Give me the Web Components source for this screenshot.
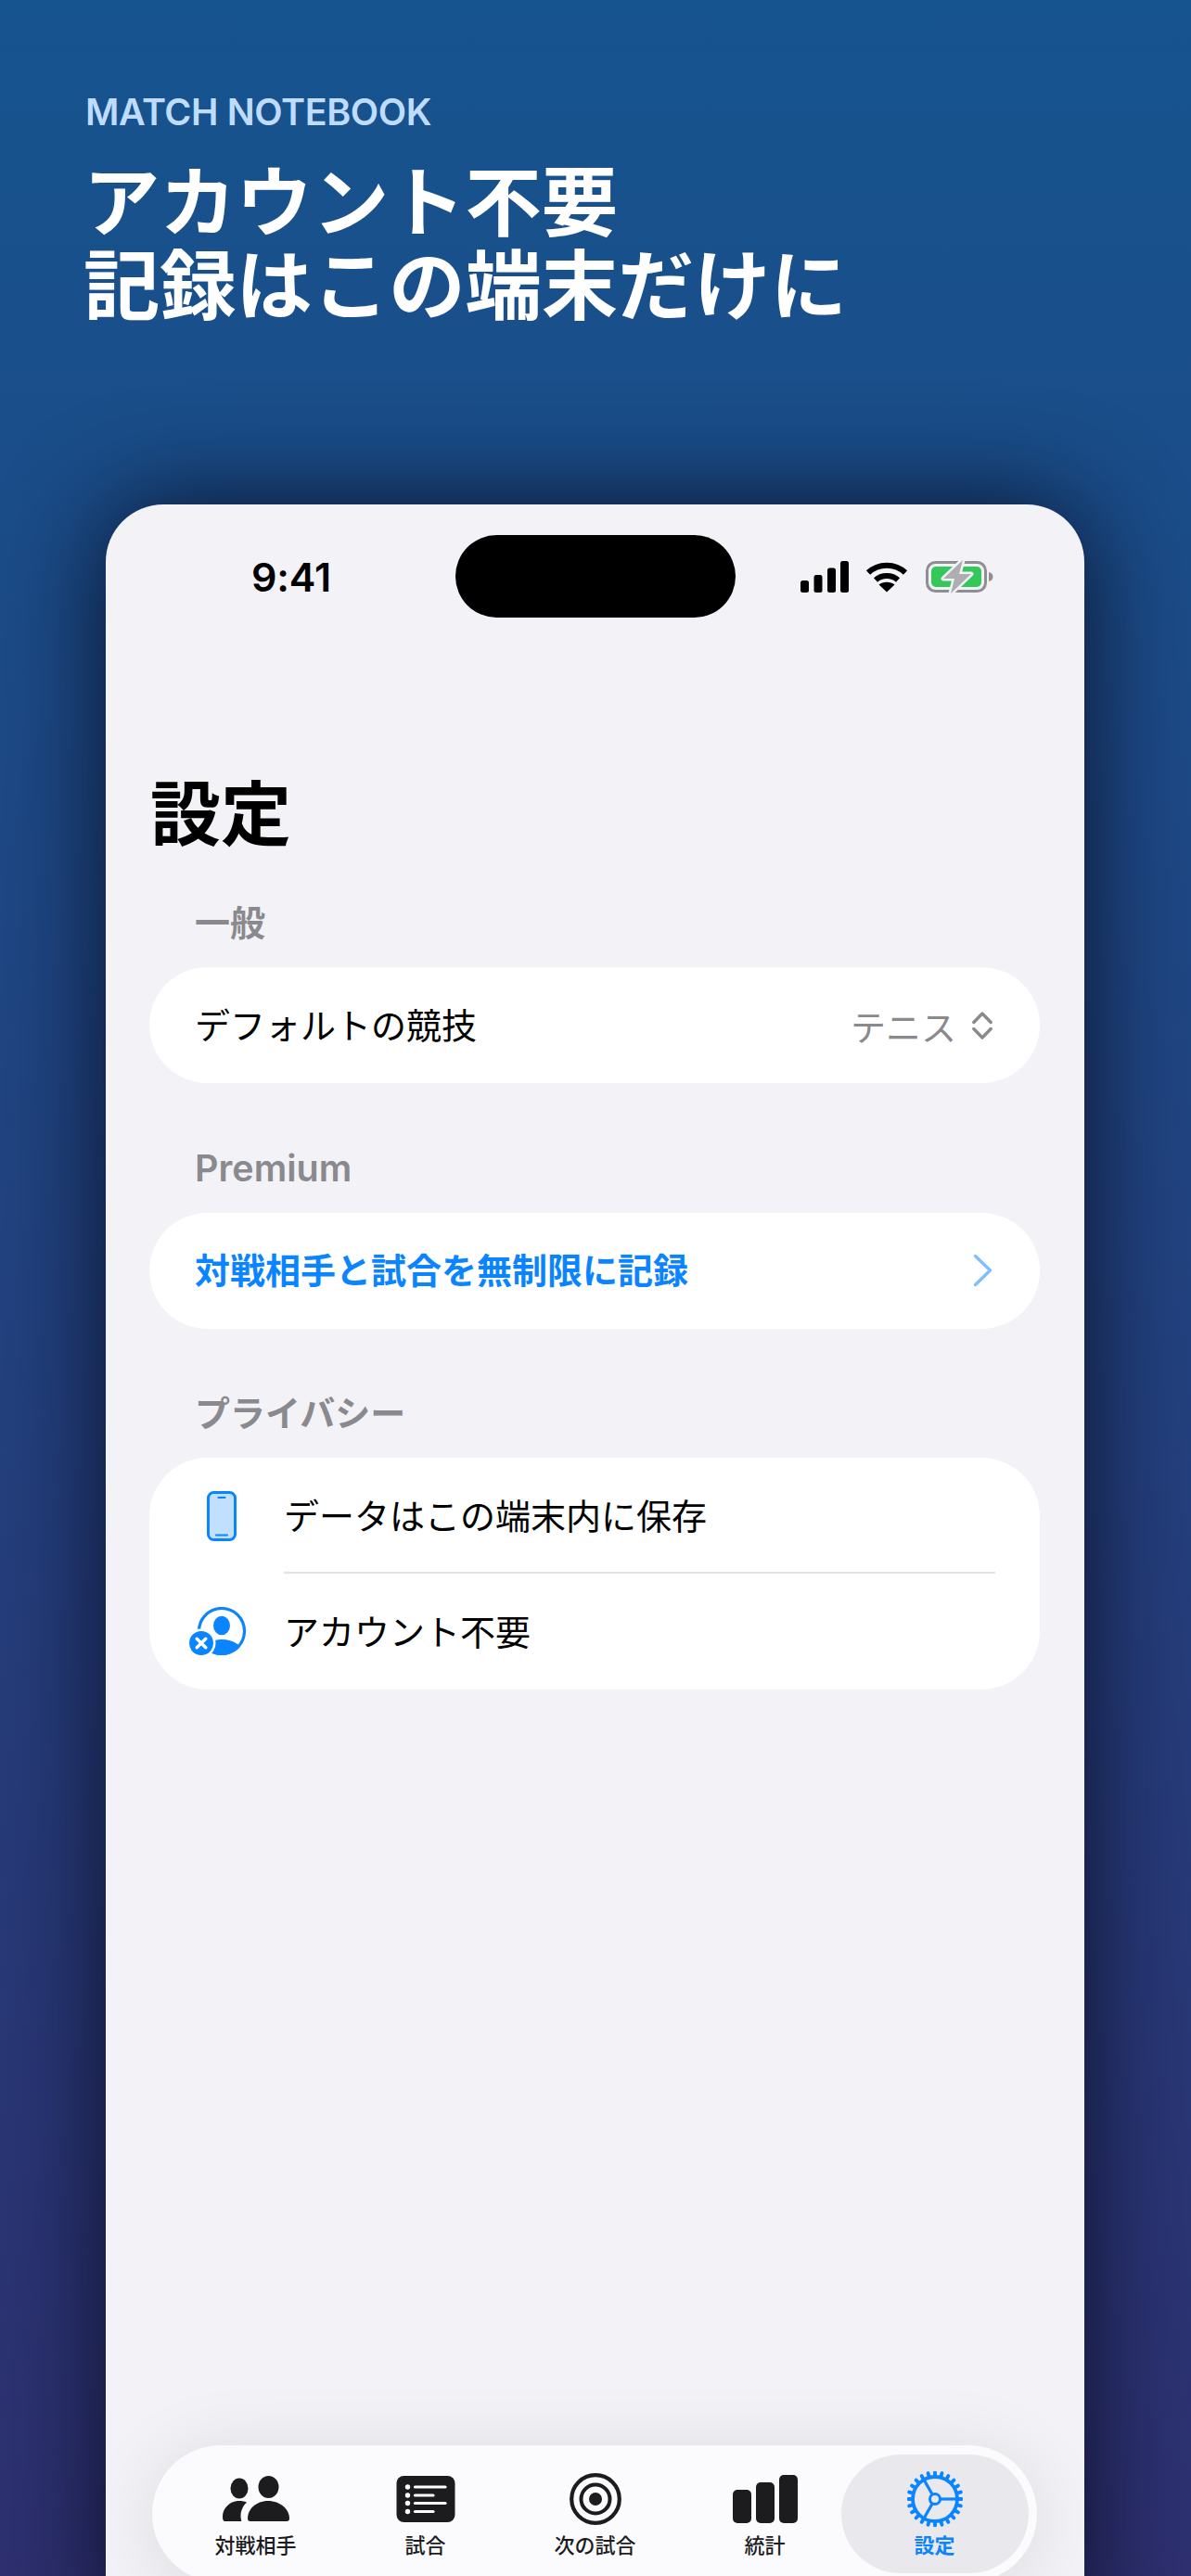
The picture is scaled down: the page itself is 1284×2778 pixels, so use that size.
<!DOCTYPE html>
<html lang="ja">
<head>
<meta charset="utf-8">
<title>Match Notebook</title>
<style>
  html, body { margin: 0; padding: 0; }
  body {
    width: 1284px;
    height: 2778px;
    overflow: hidden;
    font-family: Inter, "Noto Sans CJK JP", sans-serif;
    background: linear-gradient(180deg, #16548f 0%, #2e3070 100%);
  }
</style>
</head>
<body>
<store-shot>
  <span slot="eyebrow">MATCH NOTEBOOK</span>
  <span slot="line">アカウント不要</span>
  <span slot="line">記録はこの端末だけに</span>

  <phone-frame>
    <status-bar></status-bar>
    <large-title>設定</large-title>

    <settings-section label="一般">
      <settings-row variant="picker" value="テニス">デフォルトの競技</settings-row>
    </settings-section>

    <settings-section label="Premium" style="--label-size: 39.5px">
      <settings-row variant="link">対戦相手と試合を無制限に記録</settings-row>
    </settings-section>

    <settings-section label="プライバシー">
      <settings-row variant="info" icon="phone" divider>データはこの端末内に保存</settings-row>
      <settings-row variant="info" icon="account">アカウント不要</settings-row>
    </settings-section>

    <tab-bar slot="dock">
      <tab-item icon="people">対戦相手</tab-item>
      <tab-item icon="list">試合</tab-item>
      <tab-item icon="target">次の試合</tab-item>
      <tab-item icon="stats">統計</tab-item>
      <tab-item icon="gear" active>設定</tab-item>
    </tab-bar>
  </phone-frame>
</store-shot>

<script>
const FONT = 'Inter, "Noto Sans CJK JP", sans-serif';

function gearPath() {
  // 24 teeth round the rim
  let d = '';
  const cx = 30, cy = 30, n = 24;
  for (let i = 0; i < n; i++) {
    const a = (i / n) * Math.PI * 2;
    const x1 = cx + Math.cos(a) * 25, y1 = cy + Math.sin(a) * 25;
    const x2 = cx + Math.cos(a) * 28.8, y2 = cy + Math.sin(a) * 28.8;
    d += `M${x1.toFixed(2)} ${y1.toFixed(2)}L${x2.toFixed(2)} ${y2.toFixed(2)}`;
  }
  return d;
}

const ICONS = {
  people: `<svg width="75" height="50" viewBox="0 0 75 50" fill="#1c1c1e">
    <ellipse cx="20" cy="13.5" rx="9.5" ry="11"/>
    <ellipse cx="51.5" cy="12" rx="11" ry="12"/>
    <path d="M2 44c0-9 8-17 18-17 3 0 5.5.5 8 1.5C24 32 21.5 38 21.5 43c0 2 .3 3.5 .8 6H5c-2 0-3-1-3-5z"/>
    <path d="M29 46c0-10 9-19 22-19s23 9 23 19c0 2-1 3-3 3H32c-2 0-3-1-3-3z"/>
  </svg>`,
  list: `<svg width="64" height="50" viewBox="0 0 64 50">
    <rect x="0.5" width="63" height="50" rx="8" fill="#1c1c1e"/>
    <g fill="#fff"><circle cx="12.5" cy="12" r="2.7"/><circle cx="12.5" cy="21" r="2.7"/><circle cx="12.5" cy="29.5" r="2.7"/><circle cx="12.5" cy="38.5" r="2.7"/></g>
    <g stroke="#fff" stroke-width="3.2" stroke-linecap="round"><path d="M20.5 12H53"/><path d="M20.5 21H40"/><path d="M20.5 29.5H53"/><path d="M20.5 38.5H40"/></g>
  </svg>`,
  target: `<svg width="56" height="56" viewBox="0 0 56 56" fill="none" stroke="#1c1c1e">
    <circle cx="28" cy="28" r="25.8" stroke-width="4.2"/>
    <circle cx="28" cy="28" r="15.5" stroke-width="4"/>
    <circle cx="28" cy="28" r="7" fill="#1c1c1e" stroke="none"/>
  </svg>`,
  stats: `<svg width="70" height="52" viewBox="0 0 70 52" fill="#1c1c1e">
    <rect x="0" y="16" width="20" height="36" rx="5"/>
    <rect x="25" y="8" width="20" height="44" rx="5"/>
    <rect x="50" y="0" width="20" height="52" rx="5"/>
  </svg>`,
  gear: `<svg width="60" height="60" viewBox="0 0 60 60" fill="none" stroke="#0a84ff">
    <path d="${gearPath()}" stroke-width="3.8" stroke-linecap="round"/>
    <circle cx="30" cy="30" r="24" stroke-width="3.8"/>
    <circle cx="30" cy="30" r="5.5" stroke-width="3"/>
    <g stroke-width="3.2"><path d="M35.5 30H54"/><path d="M27.2 25.2L18 9"/><path d="M27.2 34.8L18 51"/></g>
  </svg>`,
  phone: `<svg width="32" height="54" viewBox="0 0 32 54">
    <rect x="1.5" y="1.5" width="29" height="51" rx="6" fill="#c1e0ff" stroke="#0a84ff" stroke-width="3"/>
    <path d="M12.5 7h7M10 47.5h12" stroke="#0a84ff" stroke-width="2.2" stroke-linecap="round"/>
  </svg>`,
  account: `<svg width="64" height="54" viewBox="0 0 64 54">
    <defs><clipPath id="ring"><circle cx="35" cy="26" r="26"/></clipPath></defs>
    <circle cx="35" cy="26" r="24.5" fill="none" stroke="#0a84ff" stroke-width="3.2"/>
    <ellipse cx="35" cy="20" rx="9" ry="10.3" fill="#0a84ff"/>
    <path d="M5 60C8 44 22 35 35 35S58 42 64 54v6z" fill="#0a84ff" clip-path="url(#ring)"/>
    <circle cx="13" cy="39" r="15.5" fill="#fff"/>
    <circle cx="13" cy="39" r="13" fill="#0a84ff"/>
    <path d="M8.2 34.2l9.6 9.6M17.8 34.2l-9.6 9.6" stroke="#fff" stroke-width="3.4" stroke-linecap="round"/>
  </svg>`
};

// the outer page: headline above the device
class StoreShot extends HTMLElement {
  constructor() {
    super();
    this.attachShadow({ mode: 'open' });
    this.shadowRoot.innerHTML = `
      <style>
        :host { display: block; height: 2778px; font-family: ${FONT}; }
        .head { padding: 97px 0 0 92px; height: 544px; box-sizing: border-box; }
        .eyebrow { font-size: 39.5px; line-height: 48px; font-weight: 600; color: #bfdcff; letter-spacing: -0.4px; }
        .title {
          margin: 28px 0 0 -2px;
          display: flex; flex-direction: column;
          font-size: 82.3px; line-height: 90px; font-weight: 700; color: #fff;
        }
        .device { padding-left: 114px; }
      </style>
      <div class="head">
        <div class="eyebrow"><slot name="eyebrow"></slot></div>
        <div class="title"><slot name="line"></slot></div>
      </div>
      <div class="device"><slot></slot></div>
    `;
  }
}

class PhoneFrame extends HTMLElement {
  constructor() {
    super();
    this.attachShadow({ mode: 'open' });
    this.shadowRoot.innerHTML = `
      <style>
        :host {
          display: block; width: 1055px; height: 2300px;
          box-sizing: border-box; padding-top: 33px;
          border-radius: 62px 62px 0 0;
          background: #f2f2f7;
          box-shadow: 0 0 110px rgba(8, 10, 30, 0.88);
          position: relative;
        }
        .dock { position: absolute; left: 50px; top: 2093px; }
      </style>
      <slot></slot>
      <div class="dock"><slot name="dock"></slot></div>
    `;
  }
}

class StatusBar extends HTMLElement {
  constructor() {
    super();
    this.attachShadow({ mode: 'open' });
    this.shadowRoot.innerHTML = `
      <style>
        :host { display: flex; align-items: center; height: 89px; padding-left: 157px; }
        .time { width: 84px; font-size: 43px; font-weight: 600; color: #000; line-height: 50px; letter-spacing: -0.2px; white-space: nowrap; }
        .island { width: 302px; height: 89px; border-radius: 44.5px; background: #000; margin: 0 70px 0 136px; }
        svg { display: block; }
        .wifi { margin: 0 19px 0 18px; }
      </style>
      <div class="time">9:41</div>
      <div class="island"></div>
      <svg width="52" height="34" viewBox="0 0 52 34" fill="#000">
        <rect x="0" y="21" width="9" height="13" rx="2.5"/>
        <rect x="14.5" y="15" width="9" height="19" rx="2.5"/>
        <rect x="29" y="7.5" width="9" height="26.5" rx="2.5"/>
        <rect x="43" y="0" width="9" height="34" rx="2.5"/>
      </svg>
      <svg class="wifi" width="46" height="34" viewBox="0 0 46 34" fill="none" stroke="#000" stroke-width="6">
        <path d="M3 12.5C14 2 32 2 43 12.5"/>
        <path d="M11 20.5C17.5 14.5 28.5 14.5 35 20.5"/>
        <path d="M23 33.5L14.5 25.5C19 21.8 27 21.8 31.5 25.5Z" fill="#000" stroke="none"/>
      </svg>
      <svg width="74" height="36" viewBox="0 0 74 36">
        <rect x="1.5" y="2.5" width="63" height="31" rx="9" fill="none" stroke="#8e8e93" stroke-width="3"/>
        <rect x="6" y="7" width="54" height="22" rx="5" fill="#34c759"/>
        <path d="M68 13c3 .8 4.5 2.5 4.5 5S71 22.2 68 23z" fill="#8e8e93"/>
        <path d="M40 0L19 20H31L27 36L49 15H36Z" fill="#aeaeb2" stroke="#f2f2f7" stroke-width="5" stroke-linejoin="round" paint-order="stroke"/>
      </svg>
    `;
  }
}

class LargeTitle extends HTMLElement {
  constructor() {
    super();
    this.attachShadow({ mode: 'open' });
    this.shadowRoot.innerHTML = `
      <style>
        :host { display: block; padding: 167px 0 48px 48px; font-size: 76px; line-height: 90px; font-weight: 700; color: #000; }
      </style>
      <slot></slot>
    `;
  }
}

class SettingsSection extends HTMLElement {
  static get observedAttributes() { return ['label']; }
  constructor() {
    super();
    this.attachShadow({ mode: 'open' });
    this.shadowRoot.innerHTML = `
      <style>
        :host { display: block; margin: 0 48px 0 47px; }
        .label { padding-left: 49px; height: 72px; font-size: var(--label-size, 38px); line-height: 48px; font-weight: 600; color: #8a8a8e; }
        .card { background: #fff; border-radius: 63px; overflow: hidden; margin-bottom: 67.5px; }
      </style>
      <div class="label"></div>
      <div class="card"><slot></slot></div>
    `;
  }
  attributeChangedCallback(name, oldValue, newValue) {
    if (name === 'label') this.shadowRoot.querySelector('.label').textContent = newValue;
  }
}

class SettingsRow extends HTMLElement {
  constructor() {
    super();
    this.attachShadow({ mode: 'open' });
  }
  connectedCallback() {
    const variant = this.getAttribute('variant');
    const value = this.getAttribute('value') || '';
    const icon = this.getAttribute('icon');
    let leading = '', trailing = '';
    if (variant === 'picker') {
      trailing = `<span class="value">${value}</span>
        <svg class="updown" width="22" height="30" viewBox="0 0 22 30" fill="none" stroke="#8a8a8e" stroke-width="3.4" stroke-linecap="round" stroke-linejoin="round">
          <path d="M1.8 11.5L11 2L20.2 11.5"/><path d="M1.8 18.5L11 28L20.2 18.5"/>
        </svg>`;
    } else if (variant === 'link') {
      trailing = `<svg width="21" height="36" viewBox="0 0 21 36" fill="none" stroke="#7fbfff" stroke-width="3.4" stroke-linecap="round" stroke-linejoin="round">
          <path d="M2.5 2.5L18.5 18L2.5 33.5"/>
        </svg>`;
    }
    if (icon) leading = `<span class="icon">${ICONS[icon]}</span>`;
    this.shadowRoot.innerHTML = `
      <style>
        :host { display: block; }
        .row {
          display: flex; align-items: center; height: 125px;
          padding: 0 51px 0 49px; box-sizing: border-box; position: relative;
          font-size: 38px; color: #000;
        }
        .text { flex: 1; line-height: 50px; }
        .link .text { color: #0a84ff; font-weight: 600; }
        .value { color: #8a8a8e; margin-right: 17px; }
        .icon { width: 102px; margin-left: -6px; flex: none; display: flex; padding-left: ${icon === 'phone' ? '19px' : '0'}; box-sizing: border-box; }
        svg { display: block; }
        .divider { position: absolute; left: 145px; right: 48px; bottom: 0; height: 2px; background: #e2e2e6; }
      </style>
      <div class="row ${variant}">
        ${leading}
        <span class="text"><slot></slot></span>
        ${trailing}
        ${this.hasAttribute('divider') ? '<div class="divider"></div>' : ''}
      </div>
    `;
  }
}

class TabBar extends HTMLElement {
  constructor() {
    super();
    this.attachShadow({ mode: 'open' });
    this.shadowRoot.innerHTML = `
      <style>
        :host {
          display: grid; grid-template-columns: repeat(5, 183px);
          width: 954px; height: 148px; box-sizing: border-box;
          padding: 10px 0 10px 20px;
          border-radius: 74px;
          background: #fbfbfe;
          box-shadow: 0 8px 80px rgba(0, 0, 0, 0.1);
        }
      </style>
      <slot></slot>
    `;
  }
}

class TabItem extends HTMLElement {
  constructor() {
    super();
    this.attachShadow({ mode: 'open' });
  }
  connectedCallback() {
    const active = this.hasAttribute('active');
    this.shadowRoot.innerHTML = `
      <style>
        :host {
          display: flex; flex-direction: column; align-items: center;
          height: 128px; border-radius: 64px;
          ${active ? 'margin: 0 -9.5px; background: #e9e9ed;' : ''}
        }
        .icon { height: 68px; margin-top: 14px; display: flex; align-items: center; justify-content: center; }
        svg { display: block; }
        .label { font-size: 22px; line-height: 28px; margin-top: 2px; font-weight: ${active ? 600 : 500}; color: ${active ? '#0a84ff' : '#1c1c1e'}; }
      </style>
      <div class="icon">${ICONS[this.getAttribute('icon')]}</div>
      <div class="label"><slot></slot></div>
    `;
  }
}

customElements.define('store-shot', StoreShot);
customElements.define('phone-frame', PhoneFrame);
customElements.define('status-bar', StatusBar);
customElements.define('large-title', LargeTitle);
customElements.define('settings-section', SettingsSection);
customElements.define('settings-row', SettingsRow);
customElements.define('tab-bar', TabBar);
customElements.define('tab-item', TabItem);
</script>
</body>
</html>
